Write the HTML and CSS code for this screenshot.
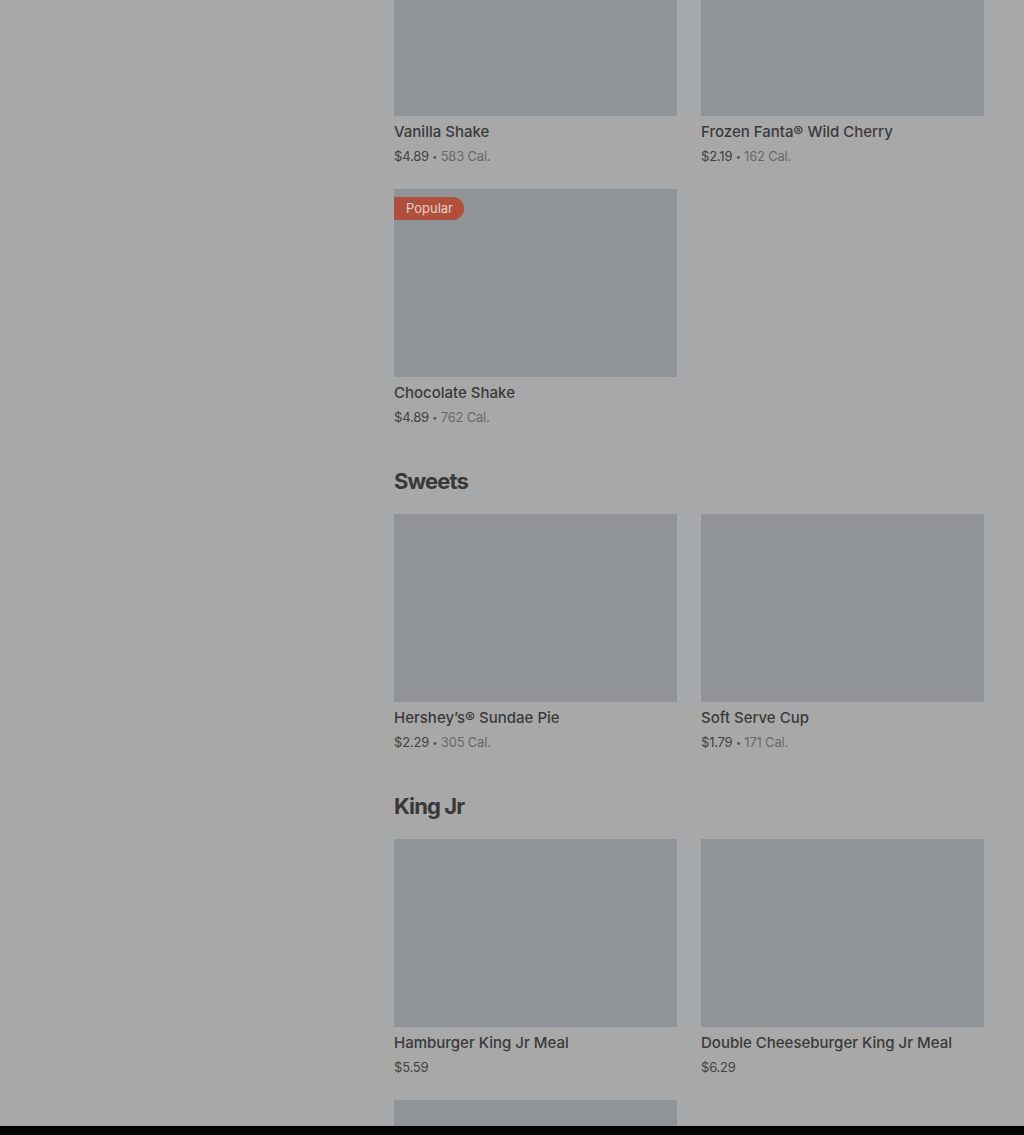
FILE: index.html
```html
<!DOCTYPE html>
<html lang="en">
<head>
<meta charset="utf-8">
<title>Menu</title>
<link rel="stylesheet" href="styles.css">
</head>
<body>
<main class="menu">
  <section class="section">
    <div class="grid">
      <article class="card">
        <div class="thumb"></div>
        <h3 class="name">Vanilla Shake</h3>
        <p class="meta"><span class="price">$4.89</span> <span class="dot">•</span> <span class="cal">583 Cal.</span></p>
      </article>
      <article class="card">
        <div class="thumb"></div>
        <h3 class="name">Frozen Fanta® Wild Cherry</h3>
        <p class="meta"><span class="price">$2.19</span> <span class="dot">•</span> <span class="cal">162 Cal.</span></p>
      </article>
      <article class="card">
        <div class="thumb"><span class="badge">Popular</span></div>
        <h3 class="name">Chocolate Shake</h3>
        <p class="meta"><span class="price">$4.89</span> <span class="dot">•</span> <span class="cal">762 Cal.</span></p>
      </article>
    </div>
  </section>

  <section class="section">
    <h2 class="heading">Sweets</h2>
    <div class="grid">
      <article class="card">
        <div class="thumb"></div>
        <h3 class="name">Hershey’s® Sundae Pie</h3>
        <p class="meta"><span class="price">$2.29</span> <span class="dot">•</span> <span class="cal">305 Cal.</span></p>
      </article>
      <article class="card">
        <div class="thumb"></div>
        <h3 class="name">Soft Serve Cup</h3>
        <p class="meta"><span class="price">$1.79</span> <span class="dot">•</span> <span class="cal">171 Cal.</span></p>
      </article>
    </div>
  </section>

  <section class="section">
    <h2 class="heading">King Jr</h2>
    <div class="grid">
      <article class="card">
        <div class="thumb"></div>
        <h3 class="name">Hamburger King Jr Meal</h3>
        <p class="meta"><span class="price">$5.59</span></p>
      </article>
      <article class="card">
        <div class="thumb"></div>
        <h3 class="name">Double Cheeseburger King Jr Meal</h3>
        <p class="meta"><span class="price">$6.29</span></p>
      </article>
      <article class="card">
        <div class="thumb"></div>
      </article>
    </div>
  </section>
</main>
<div class="bottom-bar"></div>
</body>
</html>
```

FILE: styles.css
```css
html, body {
  margin: 0;
  padding: 0;
}
body {
  background: #a8a8a8;
  font-family: Inter, "Liberation Sans", sans-serif;
  color: #3b3b3b;
  height: 1135px;
  overflow: hidden;
}
.menu {
  margin-top: -72px;
  padding-left: 394px;
  width: 590px;
  display: flex;
  flex-direction: column;
  gap: 38px;
}
.section {
  display: flex;
  flex-direction: column;
}
.heading {
  margin: 0 0 17px;
  font-size: 22px;
  line-height: 32px;
  font-weight: 700;
  letter-spacing: -0.9px;
  color: #383838;
}
.grid {
  display: grid;
  grid-template-columns: 283px 283px;
  column-gap: 24px;
  row-gap: 23px;
}
.card {
  display: flex;
  flex-direction: column;
}
.thumb {
  position: relative;
  height: 188px;
  background: #909398;
}
.badge {
  position: absolute;
  left: 0;
  top: 8px;
  height: 23px;
  line-height: 23px;
  padding: 0 11px 0 12px;
  background: #b0503c;
  color: #e6cfc8;
  font-size: 13px;
  border-radius: 0 12px 12px 0;
}
.name {
  margin: 5px 0 0;
  font-size: 15px;
  line-height: 22px;
  font-weight: 500;
  color: #3a3a3a;
}
.meta {
  margin: 3px 0 0;
  height: 20px;
  font-size: 13px;
  line-height: 20px;
  letter-spacing: -0.2px;
  color: #424242;
}
.dot {
  font-size: 9px;
  line-height: 1;
  color: #555;
  vertical-align: 1px;
}
.cal {
  color: #686868;
}
.bottom-bar {
  position: fixed;
  left: 0;
  right: 0;
  bottom: 0;
  height: 9px;
  background: #000;
}
```
